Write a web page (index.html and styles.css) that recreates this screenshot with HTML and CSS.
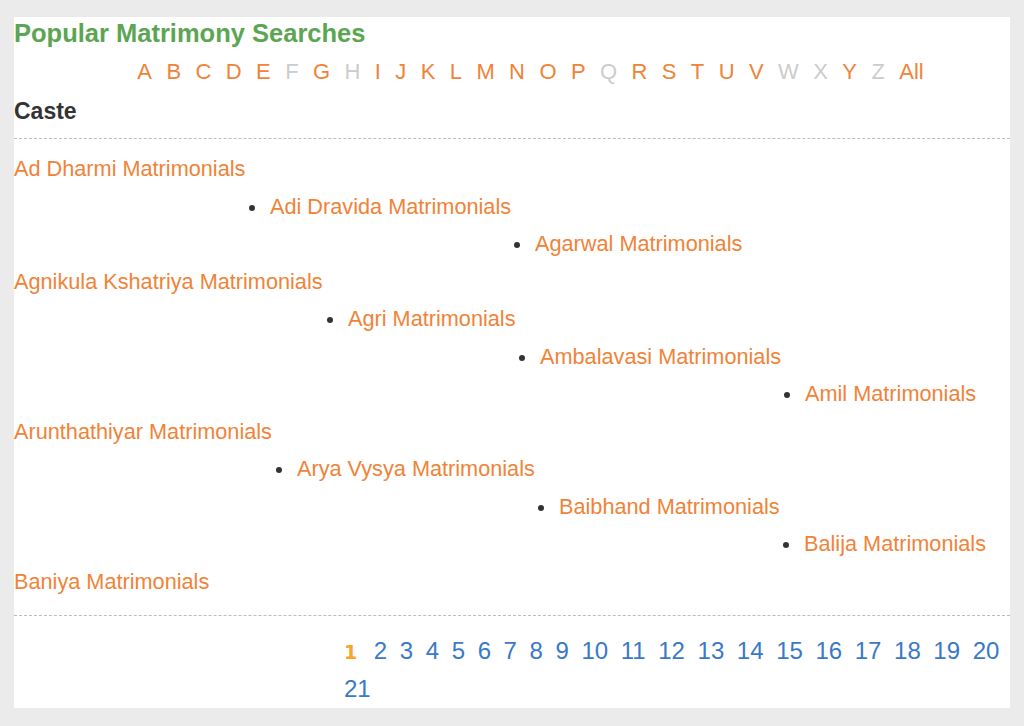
FILE: index.html
```html
<!DOCTYPE html>
<html lang="en">
<head>
    <meta charset="UTF-8">
    <meta name="viewport" content="width=device-width, initial-scale=1.0">
    <title>Popular Matrimony Searches</title>
    <link rel="stylesheet" href="styles.css">
</head>
<body>
    <div class="panel">
        <h2 class="title">Popular Matrimony Searches</h2>
        <div class="alphabet">
            <a href="#">A</a><a href="#">B</a><a href="#">C</a><a href="#">D</a><a href="#">E</a>
            <span class="off">F</span><a href="#">G</a><span class="off">H</span><a href="#">I</a><a href="#">J</a>
            <a href="#">K</a><a href="#">L</a><a href="#">M</a><a href="#">N</a><a href="#">O</a>
            <a href="#">P</a><span class="off">Q</span><a href="#">R</a><a href="#">S</a><a href="#">T</a>
            <a href="#">U</a><a href="#">V</a><span class="off">W</span><span class="off">X</span><a href="#">Y</a>
            <span class="off">Z</span><a href="#">All</a>
        </div>
        <h3 class="group-title">Caste</h3>
        <ul class="caste-list" id="caste-list">
            <li><a href="#">Ad Dharmi Matrimonials</a></li>
            <li><a href="#">Adi Dravida Matrimonials</a></li>
            <li><a href="#">Agarwal Matrimonials</a></li>
            <li><a href="#">Agnikula Kshatriya Matrimonials</a></li>
            <li><a href="#">Agri Matrimonials</a></li>
            <li><a href="#">Ambalavasi Matrimonials</a></li>
            <li><a href="#">Amil Matrimonials</a></li>
            <li><a href="#">Arunthathiyar Matrimonials</a></li>
            <li><a href="#">Arya Vysya Matrimonials</a></li>
            <li><a href="#">Baibhand Matrimonials</a></li>
            <li><a href="#">Balija Matrimonials</a></li>
            <li><a href="#">Baniya Matrimonials</a></li>
        </ul>
        <div class="pager">
            <span class="current">1</span>
            <a href="#">2</a><a href="#">3</a><a href="#">4</a><a href="#">5</a><a href="#">6</a>
            <a href="#">7</a><a href="#">8</a><a href="#">9</a><a href="#">10</a><a href="#">11</a>
            <a href="#">12</a><a href="#">13</a><a href="#">14</a><a href="#">15</a><a href="#">16</a>
            <a href="#">17</a><a href="#">18</a><a href="#">19</a><a href="#">20</a><a href="#">21</a>
        </div>
    </div>

    <script>
        // each link starts where the previous one ended, one line lower;
        // when it no longer fits, it goes back to the left edge
        function layoutCasteList() {
            const list = document.getElementById('caste-list');
            const limit = list.clientWidth;
            let end = 0;
            list.querySelectorAll('li').forEach((li, i) => {
                const width = li.querySelector('a').offsetWidth;
                if (i > 0 && end + 25 + width <= limit) {
                    li.classList.remove('row-start');
                    li.style.paddingLeft = (end + 4) + 'px';
                    end = end + 24 + width;
                } else {
                    li.classList.add('row-start');
                    li.style.paddingLeft = '0px';
                    end = width;
                }
            });
        }

        layoutCasteList();
        window.addEventListener('resize', layoutCasteList);
    </script>
</body>
</html>
```

FILE: styles.css
```css
body {
    font-family: "Liberation Sans", Arial, sans-serif;
    background-color: #EBEBEB;
    margin: 0;
    padding: 17px 14px;
}
a {
    text-decoration: none;
}
.panel {
    background-color: #FFF;
    padding-top: 2px;
    padding-bottom: 1px;
}
.title {
    margin: 0;
    font-size: 25.5px;
    line-height: 29px;
    font-weight: bold;
    color: #5BA553; /* Green heading */
}
.alphabet {
    display: flex;
    justify-content: center;
    gap: 14.4px;
    padding: 9px 0 0 37px;
    font-size: 22px;
    line-height: 30px;
}
.alphabet a {
    color: #F08338; /* Orange letters */
}
.alphabet .off {
    color: #CCC; /* No entries */
}
.group-title {
    margin: 9px 0 0;
    padding-bottom: 12px;
    border-bottom: 1px dashed #BDBDBD;
    font-size: 23px;
    line-height: 30px;
    font-weight: bold;
    color: #333;
}
.caste-list {
    list-style: none;
    margin: 11px 0 0;
    padding: 0 0 15px;
    border-bottom: 1px dashed #BDBDBD;
    font-size: 21.7px;
    line-height: 37.5px;
}
.caste-list li {
    white-space: nowrap;
}
.caste-list li::before {
    content: "";
    display: inline-block;
    width: 6px;
    height: 6px;
    margin-right: 15px;
    border-radius: 50%;
    background-color: #333;
    vertical-align: middle;
}
.caste-list li.row-start::before {
    display: none;
}
.caste-list a {
    display: inline-block;
    color: #F08338;
}
.pager {
    display: flex;
    flex-wrap: wrap;
    align-items: baseline;
    column-gap: 12.6px;
    padding: 16px 0 0 330px;
    font-size: 24px;
    line-height: 37.5px;
}
.pager a {
    color: #3A78C8; /* Blue page links */
}
.pager .current {
    margin-right: 4px;
    font-family: "DejaVu Sans", sans-serif;
    font-size: 19px;
    line-height: 20px;
    font-weight: bold;
    color: #F5A52A;
}
```
